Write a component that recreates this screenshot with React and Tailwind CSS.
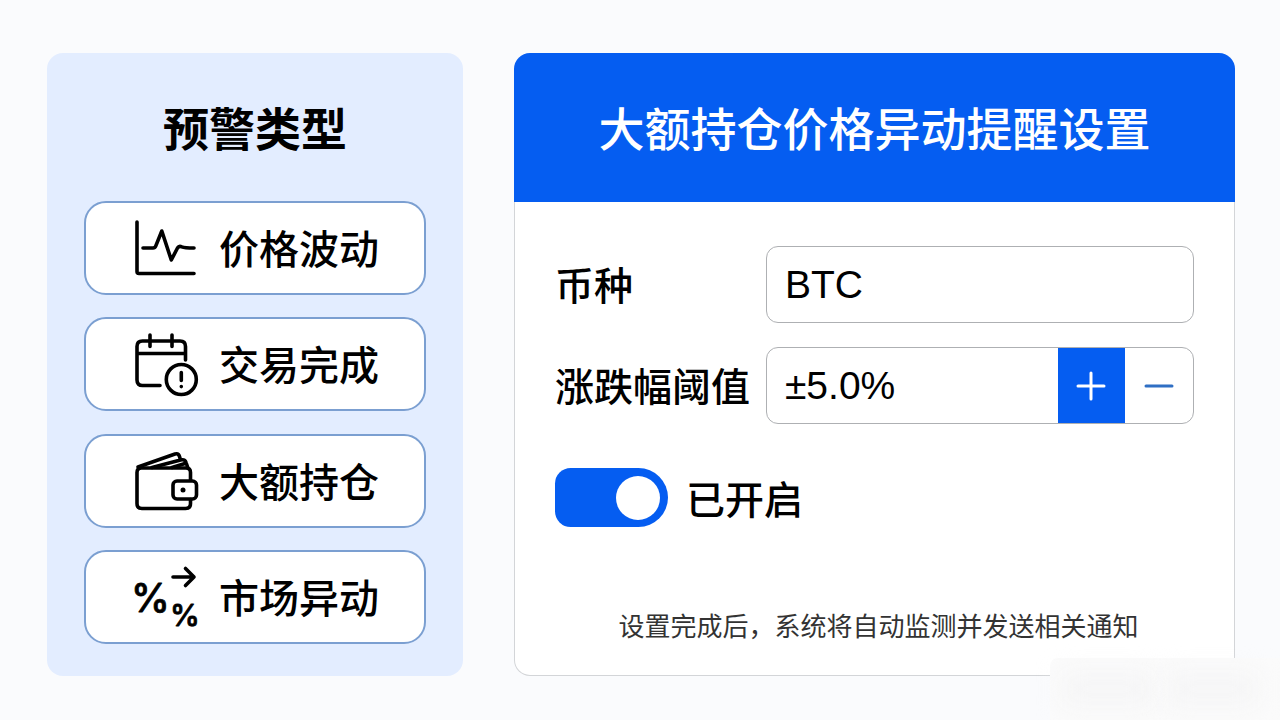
import { useState } from 'react';

const iconProps = {
  viewBox: '1 -2 66 64',
  fill: 'none',
  stroke: 'currentColor',
  strokeWidth: 3.6,
  strokeLinecap: 'round',
  strokeLinejoin: 'round',
  className: 'h-16 w-[66px] shrink-0 overflow-visible',
  'aria-hidden': true,
};

const ChartIcon = () => (
  <svg {...iconProps}>
    <path d="M4 5V54.5Q4 56.5 6 56.5H61" />
    <path d="M10 31H20Q22 31 22.7 29.2L28.8 14L38.3 43L44.5 31Q46 28.4 48.8 29.8Q51.5 31 61 31" />
  </svg>
);

const CalendarAlertIcon = () => (
  <svg {...iconProps}>
    <path d="M27 52.5H9.5Q4 52.5 4 47V13.5Q4 8 9.5 8H47Q52.5 8 52.5 13.5V27M4 20.5H52M17 2V13.5M39 2V13.5" />
    <circle cx="48.3" cy="46.5" r="15" />
    <path d="M48.3 39.5V47.5M48.3 53.5V53.6" />
  </svg>
);

const WalletIcon = () => (
  <svg {...iconProps}>
    <path d="M57.5 30V22.5Q57.5 18 53 18H8.5Q4 18 4 22.5V53.5Q4 58.5 9 58.5H52.5Q57.5 58.5 57.5 53.5V49.5" />
    <path d="M5 17L42 4Q45.5 3 46.5 6.5L47.5 10M19 17.5L47.5 10Q52 9 53 12.5L55 18M39 17.5L52 13.5" />
    <rect x="40" y="31" width="23.5" height="18" rx="4" />
    <circle cx="50" cy="40" r="2.5" fill="currentColor" stroke="none" />
  </svg>
);

const PercentIcon = () => (
  <svg {...iconProps}>
    <path d="M40 11H61M52.5 2.5L61 11L52.5 19.5" />
    <g fill="currentColor" strokeWidth="0.8" className="font-['Inter',sans-serif] font-medium">
      <text x="-2" y="46" fontSize="39">%</text>
      <text x="37" y="60" fontSize="30">%</text>
    </g>
  </svg>
);

const alertTypes = [
  { id: 'price', label: '价格波动', Icon: ChartIcon },
  { id: 'trade', label: '交易完成', Icon: CalendarAlertIcon },
  { id: 'holding', label: '大额持仓', Icon: WalletIcon },
  { id: 'market', label: '市场异动', Icon: PercentIcon },
];

const AlertTypePanel = () => (
  <aside className="flex flex-col rounded-2xl bg-[#e3edff] px-[37px] pb-8">
    <h2 className="flex h-[148px] items-center justify-center pb-0.5 text-[46px] font-bold">预警类型</h2>
    <div className="flex flex-1 flex-col justify-between gap-4">
      {alertTypes.map(({ id, label, Icon }) => (
        <button
          key={id}
          type="button"
          className="flex h-[94px] items-center gap-[19px] rounded-[22px] border-2 border-[#7b9fd1] bg-white pb-0.5 pl-12 text-[40px] font-medium"
        >
          <Icon />
          <span className="whitespace-nowrap">{label}</span>
        </button>
      ))}
    </div>
  </aside>
);

const SettingsPanel = () => {
  const [coin, setCoin] = useState('BTC');
  const [threshold, setThreshold] = useState(5);
  const [enabled, setEnabled] = useState(true);

  return (
    <main className="flex flex-col">
      <h1 className="flex h-[149px] items-center justify-center rounded-t-2xl bg-[#055df1] pb-0.5 text-[46px] font-medium whitespace-nowrap text-white">
        大额持仓价格异动提醒设置
      </h1>

      <form className="flex flex-1 flex-col rounded-b-2xl border border-t-0 border-[#d3d5d8] bg-white px-10 pt-11 text-[39px] font-medium">
        <div className="grid grid-cols-[211px_1fr] items-center gap-y-6">
          <label htmlFor="coin" className="pb-0.5 whitespace-nowrap">币种</label>
          <input
            id="coin"
            value={coin}
            onChange={(e) => setCoin(e.target.value)}
            className="h-[77px] w-full min-w-0 rounded-xl border border-[#aeb0b3] bg-white px-[18px] font-['Liberation_Sans','Noto_Sans_CJK_SC',sans-serif] font-normal"
          />

          <label htmlFor="threshold" className="pb-0.5 whitespace-nowrap">涨跌幅阈值</label>
          <div className="flex h-[77px] overflow-hidden rounded-xl border border-[#aeb0b3]">
            <input
              id="threshold"
              readOnly
              value={`±${threshold.toFixed(1)}%`}
              className="w-full min-w-0 flex-1 px-[18px] pt-0.5 font-['Liberation_Sans','Noto_Sans_CJK_SC',sans-serif] font-normal"
            />
            <button
              type="button"
              aria-label="增加"
              onClick={() => setThreshold(threshold + 0.5)}
              className="flex w-[67px] items-center justify-center bg-[#055df1] text-white"
            >
              <svg viewBox="0 0 30 30" className="size-[30px]" stroke="currentColor" strokeWidth="3" strokeLinecap="round">
                <path d="M2 15H28M15 2V28" />
              </svg>
            </button>
            <button
              type="button"
              aria-label="减少"
              onClick={() => setThreshold(Math.max(0, threshold - 0.5))}
              className="flex w-[68px] items-center justify-center text-[#2f6fc4]"
            >
              <svg viewBox="0 0 30 30" className="size-[30px]" stroke="currentColor" strokeWidth="3" strokeLinecap="round">
                <path d="M2 15H28" />
              </svg>
            </button>
          </div>
        </div>

        <div className="mt-11 flex items-center gap-[18px]">
          <input
            id="enabled"
            type="checkbox"
            role="switch"
            checked={enabled}
            onChange={(e) => setEnabled(e.target.checked)}
            className="flex h-[59px] w-[113px] appearance-none items-center rounded-l-[16px] rounded-r-[30px] bg-gray-300 px-2 before:size-[44px] before:rounded-full before:bg-white checked:justify-end checked:bg-[#055df1]"
          />
          <label htmlFor="enabled" className="leading-[59px]">已开启</label>
        </div>

        <p className="mt-auto pb-8 pl-2 text-center text-[26px] leading-9 font-normal whitespace-nowrap text-[#333]">
          设置完成后，系统将自动监测并发送相关通知
        </p>
      </form>
    </main>
  );
};

export default function App() {
  return (
    <div className="relative grid min-h-screen grid-cols-[15fr_26fr] gap-[51px] overflow-hidden bg-[#fafbfd] pt-[53px] pr-[45px] pb-11 pl-[47px] font-['Noto_Sans_CJK_SC',sans-serif] text-black">
      <AlertTypePanel />
      <SettingsPanel />

      {/* Faded corner patch */}
      <div className="absolute right-0 bottom-0 flex h-[62px] w-[230px] items-center gap-4 rounded-tl-lg bg-[#fbfbfb] px-3">
        <div className="h-8 w-[90px] bg-[#f5f5f6] blur-md"></div>
        <div className="h-8 w-[90px] bg-[#f5f5f6] blur-md"></div>
      </div>
    </div>
  );
}
